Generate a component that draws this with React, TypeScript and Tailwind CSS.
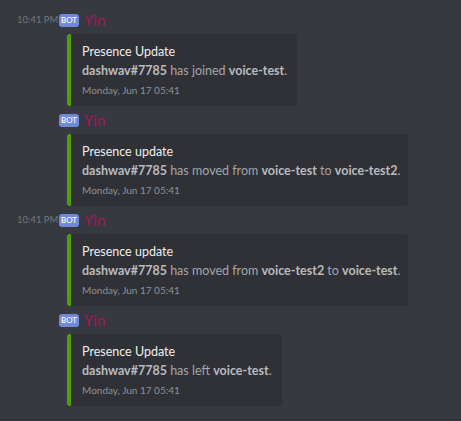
import React from "react";

type Part = { text: string; bold?: boolean };

const messages: { time?: string; title: string; parts: Part[]; width: string }[] = [
  {
    time: "10:41 PM",
    title: "Presence Update",
    parts: [
      { text: "dashwav#7785", bold: true },
      { text: " has joined " },
      { text: "voice-test", bold: true },
      { text: "." },
    ],
    width: "w-[230px]",
  },
  {
    title: "Presence update",
    parts: [
      { text: "dashwav#7785", bold: true },
      { text: " has moved from " },
      { text: "voice-test", bold: true },
      { text: " to " },
      { text: "voice-test2", bold: true },
      { text: "." },
    ],
    width: "w-[341px]",
  },
  {
    time: "10:41 PM",
    title: "Presence update",
    parts: [
      { text: "dashwav#7785", bold: true },
      { text: " has moved from " },
      { text: "voice-test2", bold: true },
      { text: " to " },
      { text: "voice-test", bold: true },
      { text: "." },
    ],
    width: "w-[341px]",
  },
  {
    title: "Presence Update",
    parts: [
      { text: "dashwav#7785", bold: true },
      { text: " has left " },
      { text: "voice-test", bold: true },
      { text: "." },
    ],
    width: "w-[215px]",
  },
];

export default function App() {
  return (
    <div
      className="w-[461px] h-[421px] bg-[#36393f] overflow-hidden flex flex-col"
      style={{ fontFamily: 'Lato, "Open Sans", sans-serif' }}
    >
      <div className="pt-[6px] flex-1">
        {messages.map((m, i) => (
          <div key={i} className="pt-[4px] flex">
            {/* time column */}
            <div className="w-[59px] shrink-0 pl-[17px] h-[20px] flex items-center whitespace-nowrap text-[9.5px] text-[#72767d]">
              {m.time}
            </div>
            <div className="flex flex-col">
              {/* header */}
              <div className="h-[20px] flex items-center gap-[5px]">
                <span className="h-[13px] w-[20px] rounded-[3px] bg-[#7289da] text-white text-[8px] leading-none flex items-center justify-center font-medium">
                  BOT
                </span>
                <span className="text-[15px] leading-none text-[#a8155a]">Yin</span>
              </div>
              {/* embed */}
              <div
                className={`${m.width} mt-[4px] ml-[8px] h-[72px] flex rounded-[3px] bg-[#2f3136] overflow-hidden`}
              >
                <div className="w-[4px] shrink-0 bg-[#4fa10a]" />
                <div className="pl-[11px] pt-[8px]">
                  <div className="text-[12.5px] leading-[19px] text-[#ededed]">
                    {m.title}
                  </div>
                  <div className="mt-[1px] text-[12.5px] leading-[18px] text-[#a3a6aa] whitespace-nowrap">
                    {m.parts.map((p, j) =>
                      p.bold ? (
                        <span key={j} className="font-bold text-[#b9bbbe]">
                          {p.text}
                        </span>
                      ) : (
                        <span key={j}>{p.text}</span>
                      )
                    )}
                  </div>
                  <div className="mt-[1px] text-[10px] leading-[18px] text-[#8e9297]">
                    Monday, Jun 17 05:41
                  </div>
                </div>
              </div>
            </div>
          </div>
        ))}
      </div>
      <div className="h-[2px] border-t border-[#2e3035]" />
    </div>
  );
}
